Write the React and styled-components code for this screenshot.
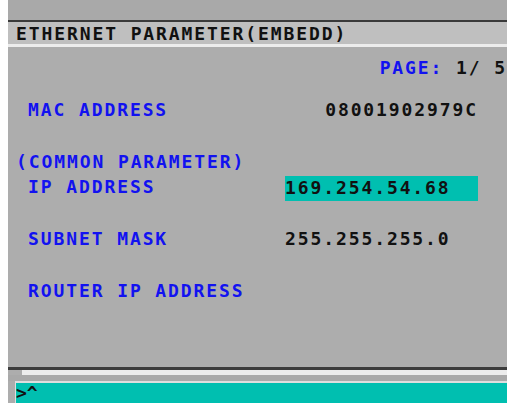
import React from "react";
import styled, { createGlobalStyle } from "styled-components";

const Global = createGlobalStyle`
  html, body { margin: 0; padding: 0; background: #ffffff; }
  body { overflow: hidden; }
`;

const Screen = styled.div`
  margin-left: 8px;
  width: 499px;
  height: 403px;
  display: flex;
  flex-direction: column;
  background: #adadad;
  font-family: "DejaVu Sans Mono", "Liberation Mono", monospace;
  font-weight: bold;
  font-size: 18px;
  letter-spacing: 1.9px;
  overflow: hidden;
`;

const TopBand = styled.div`
  height: 20px;
  background: #a9a9a9;
`;

const TitleBar = styled.div`
  height: 22px;
  border-top: 2px solid #3a3a3a;
  border-bottom: 3px solid #ececec;
  background: #bfbfbf;
  color: #111;
  padding-left: 8px;
  line-height: 23px;
  white-space: pre;
`;

const Content = styled.div`
  flex: 1;
  padding: 8px 0 0 8px;
  display: flex;
  flex-direction: column;
`;

const PageLine = styled.div`
  height: 26px;
  line-height: 26px;
  text-align: right;
  color: #1212f0;
  white-space: pre;
  margin-bottom: 16px;
`;

const PageNum = styled.span`
  color: #111;
`;

const Row = styled.div`
  display: grid;
  grid-template-columns: 269px 193px;
  height: 25.8px;
  line-height: 25.8px;
  white-space: pre;
`;

const Label = styled.div`
  color: #1212f0;
  padding-left: ${(p) => (p.$flush ? "0" : "12px")};
`;

const Value = styled.div`
  color: #111;
  text-align: ${(p) => (p.$right ? "right" : "left")};
  background: ${(p) => (p.$active ? "#00bfb0" : "transparent")};
  margin-top: ${(p) => (p.$active ? "1.6px" : "0")};
  height: ${(p) => (p.$active ? "25px" : "auto")};
  line-height: ${(p) => (p.$active ? "23px" : "inherit")};
`;

const Divider = styled.div`
  height: 3px;
  background: #3c3c3c;
`;

const ScrollTrack = styled.div`
  height: 5px;
  margin-left: 14px;
  background: #ececec;
`;

const Gap = styled.div`
  height: 6px;
  background: #a9a9a9;
`;

const InputLine = styled.div`
  margin-left: 7px;
  height: 20px;
  border-top: 2px solid #dedede;
  border-left: 1px solid #dedede;
  background: #00bfb0;
  color: #111;
  line-height: 20px;
  white-space: pre;
  letter-spacing: 0;
  overflow: hidden;
`;

const rows = [
  { label: "MAC ADDRESS", value: "08001902979C", right: true },
  { blank: true },
  { label: "(COMMON PARAMETER)", flush: true },
  { label: "IP ADDRESS", value: "169.254.54.68", active: true },
  { blank: true },
  { label: "SUBNET MASK", value: "255.255.255.0" },
  { blank: true },
  { label: "ROUTER IP ADDRESS" },
];

export default function App() {
  return (
    <>
      <Global />
      <Screen>
        <TopBand />
        <TitleBar>ETHERNET PARAMETER(EMBEDD)</TitleBar>
        <Content>
          <PageLine>
            PAGE: <PageNum>1/ 5</PageNum>
          </PageLine>
          {rows.map((r, i) =>
            r.blank ? (
              <Row key={i} />
            ) : (
              <Row key={i}>
                <Label $flush={r.flush}>{r.label}</Label>
                {r.value !== undefined ? (
                  <Value $right={r.right} $active={r.active}>
                    {r.value}
                  </Value>
                ) : (
                  <div />
                )}
              </Row>
            )
          )}
        </Content>
        <Divider />
        <ScrollTrack />
        <Gap />
        <InputLine>{">^"}</InputLine>
      </Screen>
    </>
  );
}
